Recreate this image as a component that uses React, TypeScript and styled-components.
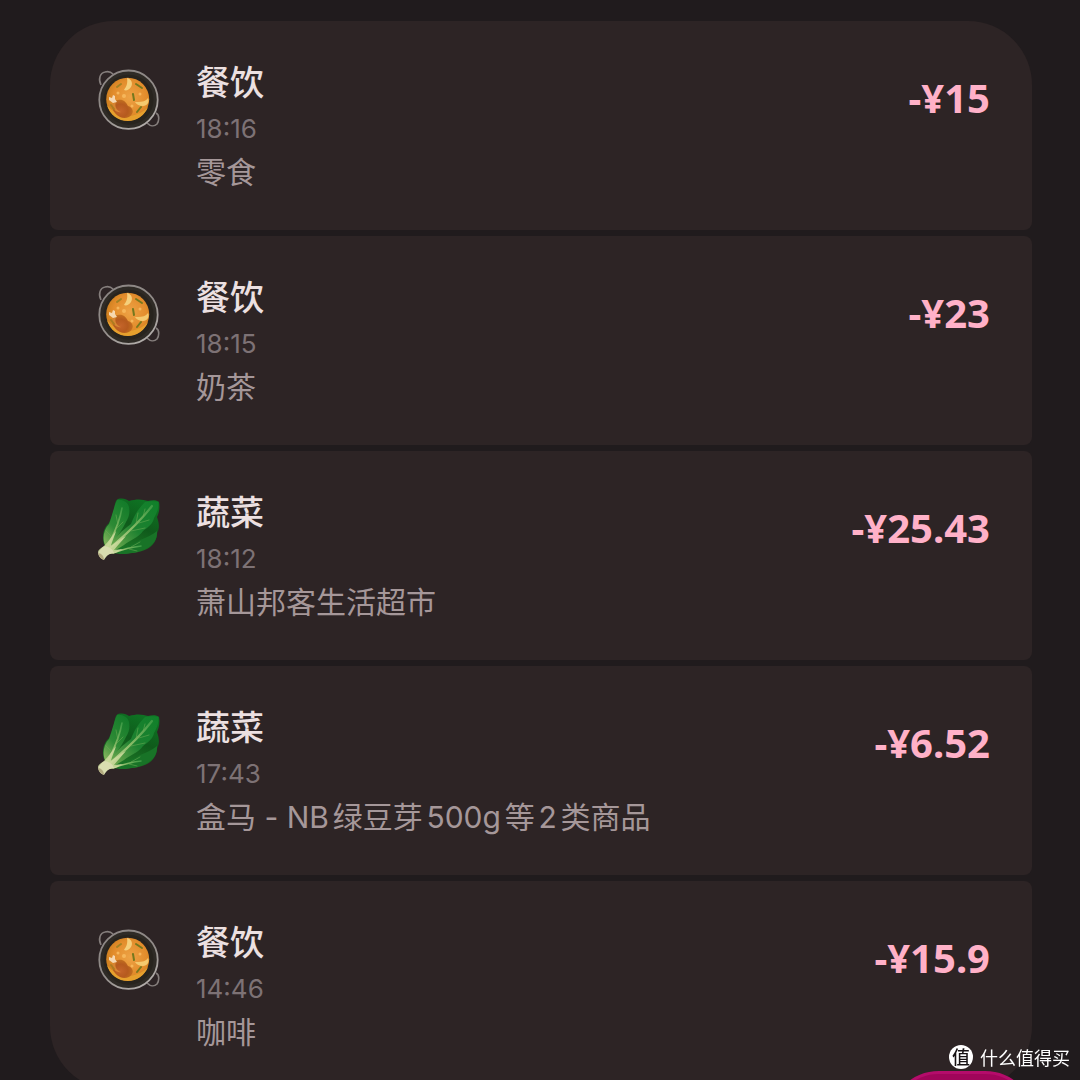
import React from "react";
import styled, {createGlobalStyle} from "styled-components";


const GlobalStyle = createGlobalStyle`
  body {
    margin: 0;
    background: #201b1d;
    font-family: Inter, "Noto Sans CJK SC", sans-serif;
  }
`;

const Page = styled("main")`
  box-sizing: border-box;
  height: 100vh;
  overflow: hidden;
  padding: 21px 48px 0 50px;
`;

const List = styled("ul")`
  display: flex;
  flex-direction: column;
  gap: 6px;
  margin: 0;
  padding: 0;
  border-radius: 64px;
  overflow: hidden;
  list-style: none;
`;

const Card = styled("li")`
  display: flex;
  align-items: flex-start;
  box-sizing: border-box;
  padding: 38px 42px 36px 46px;
  background: #2d2425;
  border-radius: 8px;
`;

const IconBox = styled("div")`
  display: flex;
  flex: none;
  margin: 7px 36px 0 0;

  svg {
    width: 64px;
    height: 64px;
  }
`;

const Details = styled("div")`
  flex: 1;
  min-width: 0;
`;

const Title = styled("h2")`
  margin: 0;
  font-weight: 500;
  font-size: 34px;
  line-height: 48px;
  color: #ece0e1;
`;

const Time = styled("time")`
  display: block;
  font-size: 26px;
  line-height: 44px;
  color: #7d7275;
`;

const Note = styled("p")`
  margin: 0;
  font-size: 30px;
  line-height: 43px;
  text-autospace: normal;
  color: #a59799;
`;

const Amount = styled("strong")`
  font-family: "Noto Sans", sans-serif;
  font-weight: 700;
  font-size: 40px;
  line-height: 78px;
  white-space: nowrap;
  color: #ffb1c8;
`;

const AddButton = styled("button")`
  position: fixed;
  right: 45px;
  bottom: -137px;
  width: 146px;
  height: 146px;
  border: 3px solid #b50c6b;
  border-radius: 50px;
  background: #a0055a;
`;

const Brand = styled("div")`
  position: fixed;
  right: 10px;
  bottom: 10px;
  display: flex;
  align-items: center;
  gap: 7px;
  font-family: "Noto Sans CJK SC", sans-serif;
  font-size: 18px;
  line-height: 26px;
  color: #ffffff;
`;

const BrandMark = styled("span")`
  width: 24px;
  height: 24px;
  border-radius: 50%;
  background: #ffffff;
  color: #171214;
  font-weight: 500;
  font-size: 18px;
  line-height: 23px;
  text-align: center;
`;


function PotIcon() {
    return (
        <svg viewBox="0 0 64 64" aria-hidden="true">
            <defs>
                <radialGradient id="soup" cx="55%" cy="45%" r="55%">
                    <stop offset="0" stopColor="#eda245" />
                    <stop offset="0.7" stopColor="#e38d2c" />
                    <stop offset="1" stopColor="#cf801f" />
                </radialGradient>
                <linearGradient id="rim" x1="0" y1="0" x2="0.6" y2="1">
                    <stop offset="0" stopColor="#8b8583" />
                    <stop offset="0.6" stopColor="#918b88" />
                    <stop offset="1" stopColor="#b0aba8" />
                </linearGradient>
                <radialGradient id="chicken" cx="40%" cy="60%" r="60%">
                    <stop offset="0" stopColor="#c4642a" />
                    <stop offset="0.6" stopColor="#b55a1e" />
                    <stop offset="1" stopColor="#c26f1f" />
                </radialGradient>
            </defs>
            <g fill="none" stroke="#857e7c" strokeWidth="1.6">
                <path d="M5 19C2 13 4 7 9 6c4-1 6 0 8 2" />
                <path d="M60 47c4 2 3 8 1 11-3 3-7 2-10-1" />
            </g>
            <circle cx="32.500" cy="33.700" r="29.200" fill="#2f2b26" stroke="url(#rim)" strokeWidth="1.800" />
            <circle cx="32.500" cy="33.700" r="25" fill="#28241e" />
            <circle cx="31.700" cy="33.200" r="21.500" fill="url(#soup)" />
            <path d="M11 39c3 10 11 16 21 16 9 0 17-6 20-14-4 5-10 7-17 9-9 2-17-3-24-11z" fill="#e6a02d" />
            <path d="M22 34c5-1 8 2 10 6 4 1 6 5 4 8-2 4-8 5-12 3-6-3-9-9-7-13 1-2 3-4 5-4z" fill="url(#chicken)" />
            <path d="M20 36c-2 4 1 9 5 10-3 1-8-2-9-6 0-2 2-4 4-4z" fill="#d68532" />
            <path d="M31 12c5 1 6 6 4 9-2 3-5 4-7 3 2-3 4-6 3-12z" fill="#f5cf7b" />
            <path d="M42 36c4 0 8-1 10-4 2 4-1 8-5 8-4 0-7-2-8-4h3z" fill="#f4c96e" />
            <path d="M13 31l3 1 1-3 2 1v3l2 3-4 1-4-3z" fill="#f6d8b0" />
            <g stroke="#74781d" strokeWidth="2" strokeLinecap="round">
                <path d="M40 18l6 4" />
                <path d="M37 28l1 6" />
                <path d="M45 41l-4 5" />
                <path d="M21 21l4-3" stroke="#a08224" />
                <path d="M15 39l3 4" stroke="#ab7c20" />
            </g>
            <g fill="#f6b65a">
                <circle cx="28" cy="30" r="2" />
                <circle cx="22" cy="27" r="1.500" />
                <circle cx="36" cy="40" r="1.500" />
                <circle cx="44" cy="28" r="1.500" />
            </g>
        </svg>
    );
}

function LeafIcon() {
    return (
        <svg viewBox="0 0 64 64" aria-hidden="true">
            <defs>
                <linearGradient id="leafBack" x1="0.8" y1="0" x2="0.4" y2="1">
                    <stop offset="0" stopColor="#0e7624" />
                    <stop offset="0.5" stopColor="#0f5a1b" />
                    <stop offset="1" stopColor="#1f7a27" />
                </linearGradient>
                <linearGradient id="leafFront" x1="0.7" y1="0" x2="0.2" y2="1">
                    <stop offset="0" stopColor="#147c2a" />
                    <stop offset="0.55" stopColor="#2e8a35" />
                    <stop offset="1" stopColor="#8fbb62" />
                </linearGradient>
                <linearGradient id="leafMain" x1="1" y1="0" x2="0" y2="1">
                    <stop offset="0" stopColor="#10802a" />
                    <stop offset="0.5" stopColor="#1d8130" />
                    <stop offset="1" stopColor="#7fb054" />
                </linearGradient>
                <linearGradient id="vein" x1="1" y1="0" x2="0" y2="1">
                    <stop offset="0" stopColor="#3c9944" />
                    <stop offset="0.5" stopColor="#88ba66" />
                    <stop offset="1" stopColor="#cddca0" />
                </linearGradient>
            </defs>
            <path d="M8 48C6 41 7 32 13 27l5-13c1-6 1-9 4-11 5-1 8 0 11 2 7-2 13-2 19 0 4-1 9-1 11 1 1 6 0 11-2 15 2 6 3 11 0 16 0 7-4 13-10 16-8 4-15 4-24 5l-12-1z" fill="url(#leafBack)" />
            <path d="M19 53c10-2 18-4 25-9 7-3 12-5 17-9 1 8-4 15-12 18-9 4-18 5-26 5z" fill="#187327" />
            <path d="M13 53c5-12 13-18 22-25 3-8 7-15 14-22 5-1 9-1 13 0 1 6-1 11-4 16-1 6-6 9-11 13-5 7-13 9-19 14-5 3-10 6-14 8z" fill="url(#leafMain)" />
            <path d="M9 49c-3-7-1-16 4-21 3-7 4-15 8-24 5-1 11 2 12 7 1 6 0 10-3 15-3 6-6 10-9 15-4 5-7 9-9 14z" fill="url(#leafFront)" />
            <g fill="none" stroke="url(#vein)" strokeLinecap="round">
                <path d="M10 54c6-13 13-24 16-42" strokeWidth="1.600" />
                <path d="M12 54c12-11 27-22 44-44" strokeWidth="2.200" />
                <path d="M17 57c11-4 18-6 28-7" strokeWidth="1.500" />
            </g>
            <g fill="none" stroke="#6fad56" strokeLinecap="round" opacity="0.6">
                <path d="M22 29l-2-10M20 33l7-7M16 41l-6-6" strokeWidth="0.900" />
                <path d="M40 28l2-11M47 21l2-8M35 35l14-3M43 27l10-3" strokeWidth="0.900" />
                <path d="M33 53l8 2M35 51l9-5" strokeWidth="0.900" />
            </g>
            <path d="M8 50c4-4 8-10 12-15-2 7-4 10-5 15 6-4 11-8 15-10-5 6-9 10-12 14l9-1c-6 3-9 5-15 5l-5 4-5-6c0-2 3-4 6-6z" fill="#cad99b" opacity="0.9" />
            <path d="M2 57c2-3 4-6 7-7 4 1 8 3 9 7-4 0-7 2-10 7-3-1-5-3-6-7z" fill="#d9ddb0" />
            <path d="M2 57c3 0 6 3 6 7-3-1-5-3-6-7z" fill="#b3ab80" />
        </svg>
    );
}


const records = [
    {kind: "pot", title: "餐饮", time: "18:16", note: "零食", amount: "-¥15"},
    {kind: "pot", title: "餐饮", time: "18:15", note: "奶茶", amount: "-¥23"},
    {kind: "leaf", title: "蔬菜", time: "18:12", note: "萧山邦客生活超市", amount: "-¥25.43"},
    {kind: "leaf", title: "蔬菜", time: "17:43", note: "盒马 - NB绿豆芽500g等2类商品", amount: "-¥6.52"},
    {kind: "pot", title: "餐饮", time: "14:46", note: "咖啡", amount: "-¥15.9"},
];

export default function App() {
    return (
        <>
            <GlobalStyle />
            <Page>
                <List>
                    {records.map(record => (
                        <Card key={record.time}>
                            <IconBox>
                                {record.kind === "pot" ? <PotIcon /> : <LeafIcon />}
                            </IconBox>
                            <Details>
                                <Title>{record.title}</Title>
                                <Time>{record.time}</Time>
                                <Note>{record.note}</Note>
                            </Details>
                            <Amount>{record.amount}</Amount>
                        </Card>
                    ))}
                </List>
            </Page>
            <AddButton type="button" aria-label="记一笔" />
            <Brand>
                <BrandMark>值</BrandMark>
                <span>什么值得买</span>
            </Brand>
        </>
    );
}
